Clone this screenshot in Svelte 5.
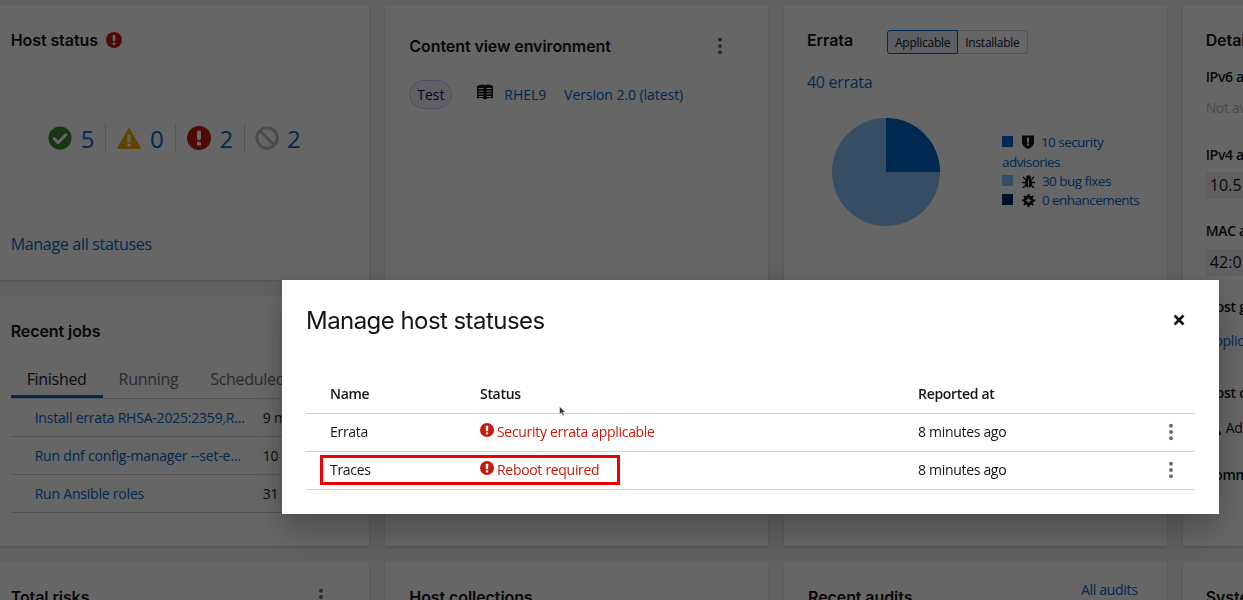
<script lang="ts">
  const jobs = [
    { name: 'Install errata RHSA-2025:2359,R...', time: '9 minutes ago' },
    { name: 'Run dnf config-manager --set-e...', time: '10 minutes ago' },
    { name: 'Run Ansible roles', time: '31 minutes ago' }
  ];

  const statuses = [
    { name: 'Errata', status: 'Security errata applicable', reported: '8 minutes ago', marked: false },
    { name: 'Traces', status: 'Reboot required', reported: '8 minutes ago', marked: true }
  ];
</script>

{#snippet kebab()}
  <svg class="kebab" viewBox="0 0 6 20" width="6" height="18">
    <circle cx="3" cy="3" r="2.2" />
    <circle cx="3" cy="10" r="2.2" />
    <circle cx="3" cy="17" r="2.2" />
  </svg>
{/snippet}

{#snippet errorIcon(size)}
  <svg viewBox="0 0 24 24" width={size} height={size}>
    <circle cx="12" cy="12" r="12" fill="#c9190b" />
    <rect x="10" y="4.5" width="4" height="9.5" rx="1.2" fill="#fff" />
    <rect x="10" y="15.8" width="4" height="3.8" rx="1.2" fill="#fff" />
  </svg>
{/snippet}

<div class="page">
  <div class="grid">
    <section class="card host-status">
      <h2 class="title">Host status <span class="title-icon">{@render errorIcon(16)}</span></h2>
      <div class="counts">
        <span class="count">
          <svg viewBox="0 0 24 24" width="24" height="24">
            <circle cx="12" cy="12" r="11.5" fill="#3e8635" />
            <path d="M6.2 12.6l4 4 7.6-7.8" fill="none" stroke="#fff" stroke-width="3" stroke-linecap="round" stroke-linejoin="round" />
          </svg>
          <a href="#s">5</a>
        </span>
        <span class="count">
          <svg viewBox="0 0 24 22" width="24" height="22">
            <path d="M12 .6L23.6 20.6a.9.9 0 0 1-.8 1.4H1.200a.9.9 0 0 1-.8-1.400z" fill="#f0ab00" />
            <rect x="10.400" y="7.500" width="3.200" height="7.500" rx="1" fill="#fff" />
            <rect x="10.400" y="16.400" width="3.200" height="3" rx="1" fill="#fff" />
          </svg>
          <a href="#s">0</a>
        </span>
        <span class="count">
          {@render errorIcon(24)}
          <a href="#s">2</a>
        </span>
        <span class="count">
          <svg viewBox="0 0 24 24" width="24" height="24">
            <circle cx="12" cy="12" r="10.200" fill="none" stroke="#b8bbbe" stroke-width="3" />
            <path d="M5 5l14 14" stroke="#b8bbbe" stroke-width="3" />
          </svg>
          <a href="#s">2</a>
        </span>
      </div>
      <a class="footer-link" href="#s">Manage all statuses</a>
    </section>

    <section class="card content-view">
      <div class="cv-head">
        <h2 class="title">Content view environment</h2>
        {@render kebab()}
      </div>
      <div class="cv-row">
        <span class="pill">Test</span>
        <svg class="cv-icon" viewBox="0 0 16 16" width="16" height="16">
          <path d="M0 2.200Q4 -.6 8 1Q12 -.6 16 2.200V14.500Q12 12.800 8 15.500Q4 12.800 0 14.500z" fill="#151515" />
          <path d="M1.500 4.500h5M1.500 7.200h5M1.500 9.900h5M1.500 12.500h5M9.500 4.500h5M9.500 7.200h5M9.500 9.900h5M9.500 12.500h5" stroke="#fff" stroke-width="1" />
        </svg>
        <a href="#s" class="cv-name">RHEL9</a>
        <a href="#s">Version 2.0 (latest)</a>
      </div>
    </section>

    <section class="card errata">
      <div class="errata-head">
        <h2 class="title">Errata</h2>
        <div class="toggle">
          <button class="on">Applicable</button>
          <button>Installable</button>
        </div>
      </div>
      <a href="#s" class="errata-total">40 errata</a>
      <div class="errata-body">
        <svg class="pie" viewBox="0 0 108 108" width="108" height="108">
          <circle cx="54" cy="54" r="54" fill="#8bc1f7" />
          <path d="M54 54V0a54 54 0 0 1 54 54z" fill="#06c" />
        </svg>
        <div class="legend">
          <div><i class="swatch s1"></i>
            <svg class="legend-icon" viewBox="0 0 12 14" width="12" height="14">
              <path d="M0 .5h12v6.500c0 3.500-3 5.800-6 7-3-1.200-6-3.500-6-7z" fill="#151515" />
              <rect x="5" y="2.500" width="2" height="5" fill="#fff" />
              <rect x="5" y="8.500" width="2" height="2" fill="#fff" />
            </svg>
            <a href="#s">10 security advisories</a></div>
          <div><i class="swatch s2"></i>
            <svg class="legend-icon" viewBox="0 0 14 14" width="13" height="13">
              <ellipse cx="7" cy="8.500" rx="4" ry="5" fill="#151515" />
              <circle cx="7" cy="2.800" r="2.500" fill="#151515" />
              <path d="M1 2l3 3M13 2l-3 3M0 8h14M1 14l3-3M13 14l-3-3" stroke="#151515" stroke-width="1.500" />
              <path d="M7 4.500v9" stroke="#fff" stroke-width=".8" />
            </svg>
            <a href="#s">30 bug fixes</a></div>
          <div><i class="swatch s3"></i>
            <svg class="legend-icon" viewBox="0 0 14 14" width="13" height="13">
              <circle cx="7" cy="7" r="5.300" fill="#151515" />
              <path d="M7 0v14M0 7h14M2 2l10 10M12 2L2 12" stroke="#151515" stroke-width="2.200" />
              <path d="M7 4.500v5M4.500 7h5" stroke="#fff" stroke-width="1.600" />
            </svg>
            <a href="#s">0 enhancements</a></div>
        </div>
      </div>
    </section>

    <section class="card details">
      <h2 class="title">Details</h2>
      <dl>
        <dt>IPv6 address</dt>
        <dd class="muted">Not available</dd>
        <dt>IPv4 address</dt>
        <dd class="copy">10.5.0.12</dd>
        <dt>MAC address</dt>
        <dd class="copy">42:01:0a:05:00:0c</dd>
        <dt>Host group</dt>
        <dd class="group"><a href="#s">Applications</a></dd>
        <dt>Host owner</dt>
        <dd class="owner">
          <svg viewBox="0 0 16 16" width="16" height="16">
            <circle cx="8" cy="4.500" r="3.500" fill="#151515" />
            <path d="M1 15c0-4 3-6 7-6s7 2 7 6z" fill="#151515" />
          </svg>
          Admin User
        </dd>
        <dt>Comment</dt>
      </dl>
    </section>

    <section class="card jobs">
      <h2 class="title">Recent jobs</h2>
      <div class="tabs">
        <span class="tab active">Finished</span>
        <span class="tab">Running</span>
        <span class="tab">Scheduled</span>
      </div>
      {#each jobs as job}
        <div class="job">
          <a href="#s">{job.name}</a>
          <span>{job.time}</span>
        </div>
      {/each}
    </section>
    <section class="card"></section>
    <section class="card"></section>

    <section class="card">
      <div class="cv-head"><h2 class="title">Total risks</h2>{@render kebab()}</div>
    </section>
    <section class="card"><h2 class="title">Host collections</h2></section>
    <section class="card audits">
      <h2 class="title">Recent audits</h2>
      <a href="#s">All audits</a>
    </section>
    <section class="card details-next"><h2 class="title">System properties</h2></section>
  </div>
</div>

<div class="backdrop"></div>

<div class="modal" role="dialog">
  <header>
    <h1>Manage host statuses</h1>
    <svg viewBox="0 0 12 12" width="12" height="12">
      <path d="M1.500 1.500l9 9M10.500 1.500l-9 9" stroke="#151515" stroke-width="2.600" />
    </svg>
  </header>
  <table>
    <thead>
      <tr><th class="c-name">Name</th><th class="c-status">Status</th><th>Reported at</th><th></th></tr>
    </thead>
    <tbody>
      {#each statuses as row}
        <tr>
          <td class="c-name">{row.name}{#if row.marked}<span class="marker"></span>{/if}</td>
          <td class="c-status"><span class="err">{@render errorIcon(14)}{row.status}</span></td>
          <td>{row.reported}</td>
          <td class="c-kebab">{@render kebab()}</td>
        </tr>
      {/each}
    </tbody>
  </table>
</div>

<svg class="cursor" viewBox="0 0 7 11" width="7" height="11">
  <path d="M.5.500v8l2-1.800 1.300 3 1.400-.6-1.300-2.900h2.600z" fill="#333" stroke="#fff" stroke-width=".5" />
</svg>

<style>
  :global(body) {
    overflow: hidden;
    background: #f0f0f0;
    font-family: "Open Sans", sans-serif;
    font-size: 14px;
    letter-spacing: -0.022em;
    color: #151515;
  }
  a {
    color: #06c;
    text-decoration: none;
  }
  .page {
    height: 600px;
    overflow: hidden;
  }
  .grid {
    display: grid;
    grid-template-columns: repeat(4, 382.67px);
    grid-template-rows: 275px 250px 200px;
    gap: 16px;
    margin-left: -13.33px;
    padding-top: 5px;
  }
  .card {
    background: #fff;
    box-shadow: 0 1px 2px rgba(0, 0, 0, 0.16);
    padding: 24px;
    position: relative;
    white-space: nowrap;
    overflow: hidden;
  }
  .title {
    margin: 0;
    font-family: Inter, sans-serif;
    font-size: 16px;
    font-weight: 600;
    letter-spacing: -0.005em;
    line-height: 22px;
    display: flex;
    align-items: center;
  }
  .title-icon {
    display: flex;
    margin-left: 8px;
  }
  .kebab {
    fill: #6a6e73;
    display: block;
  }

  .host-status {
    display: flex;
    flex-direction: column;
  }
  .counts {
    display: flex;
    justify-content: center;
    align-items: center;
    margin-top: 72px;
    height: 30px;
    padding-right: 8px;
  }
  .count {
    display: flex;
    align-items: center;
    gap: 9px;
    padding: 0 11px;
    font-size: 24px;
    height: 30px;
    border-left: 1px solid #d2d2d2;
  }
  .count:first-child {
    border-left: 0;
  }
  .count:last-child {
    padding-left: 10px;
    gap: 8px;
  }
  .footer-link {
    margin-top: auto;
    font-size: 16px;
    margin-bottom: 1px;
  }

  .content-view {
    padding-top: 30px;
  }
  .cv-head {
    display: flex;
    justify-content: space-between;
    align-items: center;
    padding-right: 21px;
  }
  .cv-row {
    display: flex;
    align-items: center;
    margin-top: 23px;
    letter-spacing: -0.004em;
  }
  .pill {
    border: 1px solid #cbc1ff;
    background: #f2f0fc;
    color: #1f0066;
    border-radius: 15px;
    height: 29px;
    width: 43px;
    box-sizing: border-box;
    display: flex;
    align-items: center;
    justify-content: center;
  }
  .cv-icon {
    margin: -5px 11px 0 25px;
  }
  .cv-name {
    margin-right: 18px;
  }

  .errata {
    padding-left: 23px;
  }
  .errata-head {
    display: flex;
    align-items: center;
    gap: 34px;
    height: 24px;
    margin-top: -1px;
  }
  .toggle {
    display: flex;
    margin-top: 4px;
  }
  .toggle button {
    font: 12px "Open Sans", sans-serif;
    letter-spacing: -0.022em;
    height: 24px;
    padding: 0 7px;
    background: #fff;
    color: #151515;
    border: 1px solid #d2d2d2;
    border-left: 0;
    border-radius: 0 3px 3px 0;
  }
  .toggle .on {
    background: #e7f1fa;
    border: 1px solid #06c;
    border-radius: 3px 0 0 3px;
  }
  .errata-total {
    display: block;
    margin-top: 19px;
    font-size: 16px;
  }
  .errata-body {
    display: flex;
    align-items: center;
    margin-top: 25px;
    padding-left: 25px;
  }
  .pie {
    flex-shrink: 0;
  }
  .legend {
    margin-left: 62px;
    width: 145px;
    flex-shrink: 0;
    white-space: normal;
    font-size: 13.5px;
    line-height: 19.3px;
    letter-spacing: -0.04em;
  }
  .swatch {
    display: inline-block;
    width: 11px;
    height: 11px;
    margin-right: 6px;
  }
  .s1 { background: #06c; }
  .s2 { background: #8bc1f7; }
  .s3 { background: #002f5d; }
  .legend-icon {
    vertical-align: -2px;
    margin-right: 4px;
  }

  .details {
    grid-row: span 2;
    padding-left: 23px;
  }
  .details-next {
    padding-left: 23px;
  }
  dl {
    margin: 16px 0 0;
  }
  dt {
    font-weight: 600;
    line-height: 20px;
  }
  dd {
    margin: 0;
    line-height: 20px;
  }
  .muted {
    color: #b8bbbe;
    margin-top: 11px;
    margin-bottom: 27px;
  }
  .copy {
    margin-top: 7px;
    background: #f0f0f0;
    padding: 0 4px;
    font-size: 16px;
    line-height: 27px;
    letter-spacing: 0.01em;
    margin-bottom: 22px;
  }
  dd.copy + dt + dd.copy {
    margin-top: 8px;
    margin-bottom: 21px;
  }
  .group {
    margin-top: 14px;
    margin-bottom: 32px;
  }
  .owner {
    display: flex;
    align-items: center;
    gap: 4px;
    margin-top: 15px;
    margin-bottom: 27px;
  }

  .tabs {
    display: flex;
    margin-top: 18px;
    border-bottom: 1px solid #d2d2d2;
    font-size: 16px;
    color: #6a6e73;
  }
  .tab {
    padding: 8px 16px;
  }
  .tab.active {
    color: #151515;
    box-shadow: inset 0 -3px 0 #06c;
  }
  .job {
    display: flex;
    align-items: center;
    height: 37px;
    border-bottom: 1px solid #d2d2d2;
    letter-spacing: -0.015em;
  }
  .job a {
    width: 228px;
    margin-left: 24px;
    flex-shrink: 0;
  }

  .audits a {
    position: absolute;
    right: 29px;
    top: 18px;
  }

  .backdrop {
    position: fixed;
    inset: 0;
    background: rgba(0, 0, 0, 0.6);
  }
  .modal {
    position: fixed;
    left: 282px;
    top: 280px;
    width: 937px;
    height: 234px;
    box-sizing: border-box;
    background: #fff;
    padding: 24px;
    box-shadow: 0 16px 32px rgba(0, 0, 0, 0.25), 0 0 8px rgba(0, 0, 0, 0.1);
  }
  .modal header {
    display: flex;
    justify-content: space-between;
    align-items: center;
    height: 32px;
    padding-right: 10px;
  }
  .modal h1 {
    margin: 0;
    font-family: Inter, sans-serif;
    font-size: 24px;
    font-weight: 400;
    letter-spacing: -0.023em;
  }
  table {
    width: 889px;
    margin-top: 38px;
    border-collapse: collapse;
    table-layout: fixed;
  }
  th {
    text-align: left;
    font-weight: 600;
    height: 39px;
  }
  th, td {
    padding: 0;
    border-bottom: 1px solid #d2d2d2;
  }
  td {
    height: 35px;
    padding-bottom: 2px;
  }
  th:nth-child(3) { width: 220px; }
  th:nth-child(4) { width: 57px; }
  .c-name {
    width: 150px;
    padding-left: 24px;
    position: relative;
  }
  .c-status {
    width: 438px;
  }
  .c-kebab svg {
    margin: 0 21px 0 auto;
  }
  .err {
    color: #c9190b;
    display: flex;
    align-items: center;
    gap: 3px;
  }
  .err svg {
    margin-top: -4px;
  }
  .marker {
    position: absolute;
    left: 14px;
    top: 3px;
    width: 300px;
    height: 30px;
    box-sizing: border-box;
    border: 3px solid #ee0000;
  }
  .cursor {
    position: fixed;
    left: 559px;
    top: 406px;
  }
</style>
